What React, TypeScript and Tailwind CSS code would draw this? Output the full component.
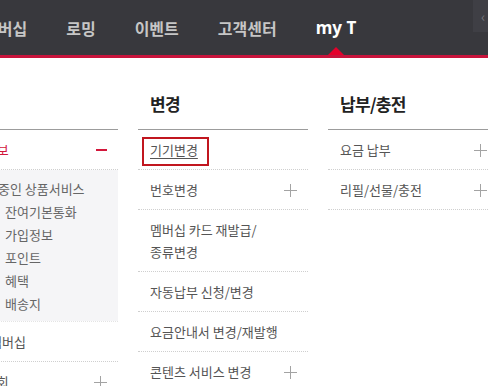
import React from "react";

const Plus = () => (
  <svg width="13" height="13" viewBox="0 0 13 13" className="shrink-0">
    <path d="M6.5 0v13M0 6.5h13" stroke="#a3a3a3" strokeWidth="1" />
  </svg>
);

const rowCls =
  "flex items-center justify-between pr-[11px] pt-[9px] pb-[8px] leading-[22px] text-[13px] text-[#555] border-b border-dotted border-[#cfcfcf]";

const headCls =
  "pt-[34px] pb-[13px] pl-[12px] text-[17px] leading-[24px] font-bold text-[#222] tracking-[-0.04em] border-b border-[#9c9c9c]";

export default function App() {
  return (
    <div className="w-[488px] h-[386px] overflow-hidden bg-white font-['Noto_Sans_CJK_KR',sans-serif]">
      <header className="h-[55px] bg-[#38383d] flex">
        <nav className="flex h-full items-center gap-[39px] -ml-[17px] text-[16px] font-bold text-[#c6c6c6] whitespace-nowrap">
          <span>멤버십</span>
          <span>로밍</span>
          <span>이벤트</span>
          <span>고객센터</span>
          <span className="relative h-full flex items-center text-white text-[17px] font-['Noto_Sans','Noto_Sans_CJK_KR',sans-serif]">
            my T
            <span className="absolute bottom-0 left-1/2 -translate-x-1/2 w-0 h-0 border-x-[8px] border-x-transparent border-b-[8px] border-b-[#e4002b]" />
          </span>
        </nav>
        <div className="ml-auto w-[15px] h-[32px] bg-[#3f3f45] flex items-center pl-[8px] text-[#77777c] text-[14px] leading-none">
          ‹
        </div>
      </header>
      <div className="h-[3px] bg-[#c8143c]" />

      <div className="flex gap-[20px] -ml-[52px]">
        {/* left column (mostly cut off) */}
        <div className="w-[170px] shrink-0">
          <h2 className={headCls}>조회</h2>
          <div className={rowCls + " pl-[10px]"}>
            <span className="text-[#d3173b] whitespace-nowrap">나의 정보</span>
            <span className="w-[11px] h-[2px] bg-[#d3173b]" />
          </div>
          <div className="bg-[#f5f5f7] pt-[7px] pb-[6px] leading-[23px] text-[13px] text-[#666] whitespace-nowrap">
            <div className="pl-[26px]">이용중인 상품서비스</div>
            <div className="pl-[57px]">잔여기본통화</div>
            <div className="pl-[57px]">가입정보</div>
            <div className="pl-[57px]">포인트</div>
            <div className="pl-[57px]">혜택</div>
            <div className="pl-[57px]">배송지</div>
          </div>
          <div className={rowCls + " pl-[42px] border-t border-t-[#e4e4e4]"}>
            <span className="whitespace-nowrap">멤버십</span>
          </div>
          <div className={rowCls + " pl-[10px]"}>
            <span className="whitespace-nowrap">요금 조회</span>
            <Plus />
          </div>
        </div>

        {/* middle column */}
        <div className="w-[170px] shrink-0">
          <h2 className={headCls}>변경</h2>
          <div className={rowCls + " pl-[12px]"}>
            <span className="relative underline underline-offset-[3px]">
              기기변경
              <span className="absolute -left-[8px] -right-[11px] -top-[2px] -bottom-[5px] border-2 border-[#c1161f]" />
            </span>
          </div>
          <div className={rowCls + " pl-[12px]"}>
            <span>번호변경</span>
            <Plus />
          </div>
          <div className={rowCls + " pl-[12px]"}>
            <span>
              멤버십 카드 재발급/
              <br />
              종류변경
            </span>
          </div>
          <div className={rowCls + " pl-[12px]"}>
            <span>자동납부 신청/변경</span>
          </div>
          <div className={rowCls + " pl-[12px]"}>
            <span>요금안내서 변경/재발행</span>
          </div>
          <div className={rowCls + " pl-[12px]"}>
            <span>콘텐츠 서비스 변경</span>
            <Plus />
          </div>
        </div>

        {/* right column */}
        <div className="w-[170px] shrink-0">
          <h2 className={headCls}>납부/충전</h2>
          <div className={rowCls + " pl-[12px]"}>
            <span>요금 납부</span>
            <Plus />
          </div>
          <div className={rowCls + " pl-[12px]"}>
            <span>리필/선물/충전</span>
            <Plus />
          </div>
        </div>
      </div>
    </div>
  );
}
